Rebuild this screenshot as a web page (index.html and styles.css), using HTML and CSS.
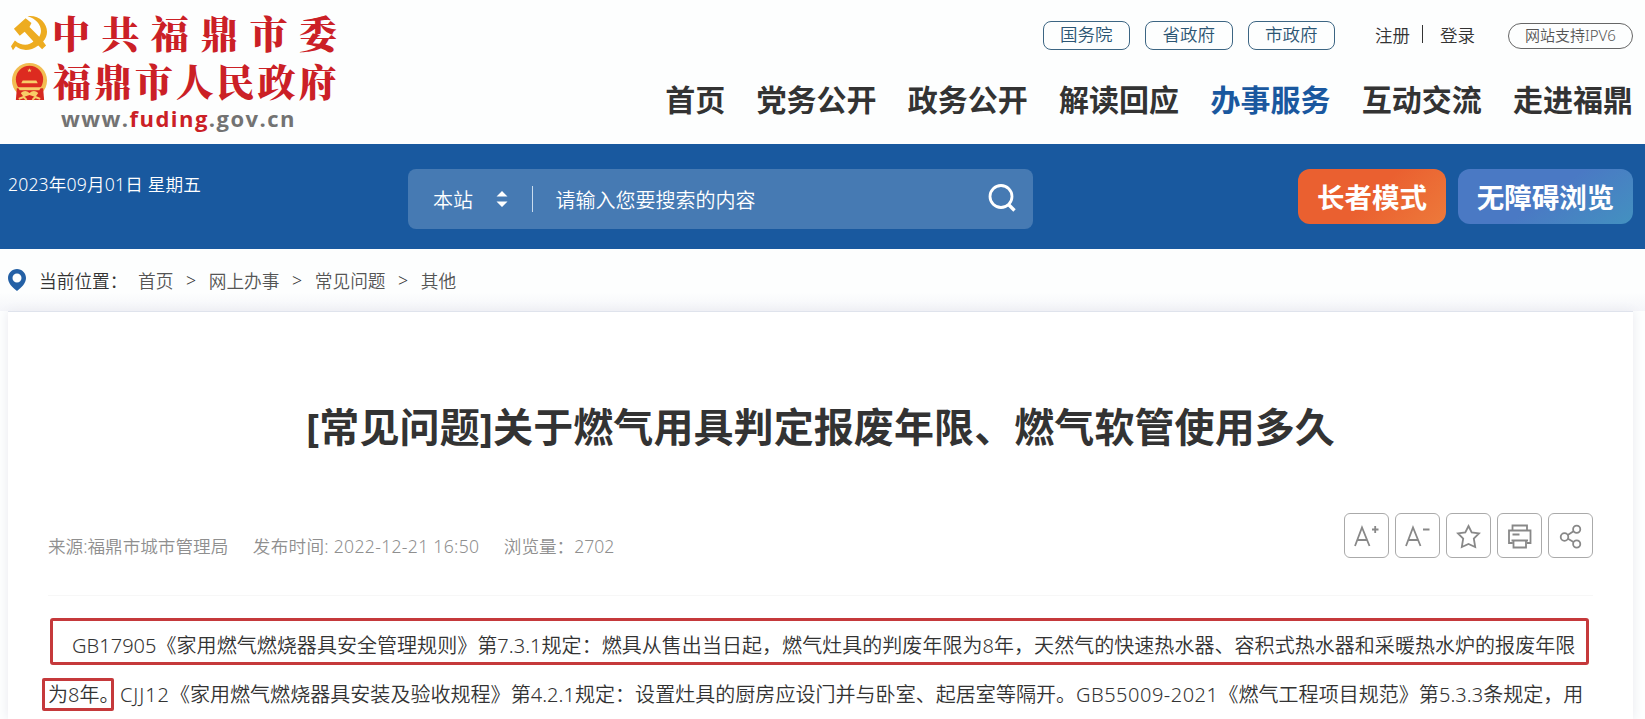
FILE: index.html
```html
<!DOCTYPE html>
<html lang="zh-CN">
<head>
<meta charset="utf-8">
<title>福鼎市人民政府</title>
<link rel="stylesheet" href="styles.css">
</head>
<body>
<header class="header">
  <div class="brand">
    <svg class="emblems" width="37" height="92" viewBox="0 0 38 92">
      <path d="M17 1C33 -1 43 16 33 27L36 31L32 35L28 31C20 37 11 37 5 32L2 36L0 32L4 26C11 32 19 31 23 27L14 17L9 21L3 14L15 3L21 8L19 12L29 22C34 14 28 4 17 1Z" fill="#edac20"/>
      <circle cx="19" cy="67" r="18" fill="#f2bd52"/>
      <path d="M6 75L5 87H34L33 75Z" fill="#d6281f"/>
      <circle cx="19" cy="66" r="14" fill="#dd2b20"/>
      <path d="M19 54.500l.7 1.500h1.600l-1.300 1 .5 1.600-1.500-1-1.500 1 .5-1.600-1.300-1h1.600zM12 67h14l1.500 3h-17zM7 74h24l-2 3H9zM10 80c3-3 6-3 9 0 3-3 6-3 9 0l-3 4-6-2-6 2z" fill="#f8cd68"/>
      <path d="M8 86l5-2 3 3M30 86l-5-2-3 3" fill="none" stroke="#f8cd68" stroke-width="2"/>
    </svg>
    <div class="names">
      <div class="name party">中共福鼎市委</div>
      <div class="name gov">福鼎市人民政府</div>
      <div class="domain">www.<b>fuding</b>.gov.cn</div>
    </div>
  </div>
  <div class="header-right">
    <div class="top-links">
      <a class="pill">国务院</a><a class="pill">省政府</a><a class="pill">市政府</a>
      <div class="account"><span>注册</span><i></i><span>登录</span></div>
      <a class="ipv6">网站支持IPV6</a>
    </div>
    <nav class="nav"><a>首页</a><a>党务公开</a><a>政务公开</a><a>解读回应</a><a class="active">办事服务</a><a>互动交流</a><a>走进福鼎</a></nav>
  </div>
</header>

<section class="banner">
  <div class="date">2023年09月01日 星期五</div>
  <div class="search">
    <span>本站</span>
    <svg class="arrows" width="12" height="16" viewBox="0 0 12 16"><path d="M6 0L11.5 5.5H.5ZM6 16L.5 10.5H11.5Z" fill="#fff"/></svg>
    <i class="divider"></i>
    <span class="placeholder">请输入您要搜索的内容</span>
    <svg class="lens" width="28" height="28" viewBox="0 0 28 28" fill="none" stroke="#fff" stroke-width="2.8"><circle cx="13" cy="12.5" r="11"/><path d="M20.5 20.5L26.5 26.5" stroke-width="3.4"/></svg>
  </div>
  <div class="modes"><a class="mode elder">长者模式</a><a class="mode access">无障碍浏览</a></div>
</section>

<div class="crumbs">
  <svg width="18" height="22" viewBox="0 0 18 22"><path fill-rule="evenodd" d="M9 0C4 0 0 4 0 9C0 14 4 18 9 22C14 18 18 14 18 9C18 4 14 0 9 0ZM9 4.5A4.5 4.5 0 1 1 9 13.5A4.5 4.5 0 1 1 9 4.5Z" fill="#2460a5"/></svg>
  <span class="here">当前位置：</span><a>首页</a><i>&gt;</i><a>网上办事</a><i>&gt;</i><a>常见问题</a><i>&gt;</i><a>其他</a>
</div>

<main class="card">
  <h1 class="title">[常见问题]关于燃气用具判定报废年限、燃气软管使用多久</h1>
  <div class="info">
    <div class="meta"><span class="source">来源:福鼎市城市管理局</span><span class="time">发布时间: 2022-12-21 16:50</span><span>浏览量：2702</span></div>
    <div class="tools">
      <a><svg viewBox="0 0 45 45"><path d="M11 33L18 14.5L25.5 33M13.5 27H23M28 16.5H34.5M31.2 13V20"/></svg></a>
      <a><svg viewBox="0 0 45 45"><path d="M11 33L18 14.5L25.5 33M13.5 27H23M28 16.5H34.5"/></svg></a>
      <a><svg viewBox="0 0 45 45"><path d="M22.5 13L25.7 19.4L33 20.3L27.8 25.5L29.2 34L22.5 31L15.8 34L17.2 25.5L12 20.3L19.3 19.4Z"/></svg></a>
      <a><svg viewBox="0 0 45 45"><path d="M15.5 17.5V12.5H30V17.5M15.5 30H12V17.5H33.5V30H30M15.5 21.5H22.5M14.5 27.5H31M16.5 27.5V34.5H29V27.5"/></svg></a>
      <a><svg viewBox="0 0 45 45"><circle cx="16.5" cy="24" r="3.8"/><circle cx="28.7" cy="16.2" r="3.6"/><circle cx="28.7" cy="31" r="3.6"/><path d="M19.8 22L25.5 18.2M20 25.7L25.5 29"/></svg></a>
    </div>
  </div>
  <article class="article">
    <p class="line first"><span class="t1">GB17905《家用燃气燃烧器具安全管理规则》第7.3.1规定：燃具从售出当日起，燃气灶具的判废年限为8年，天然气的快速热水器、容积式热水器和采暖热水炉的报废年限</span></p>
    <p class="line second"><span class="mark">为8年。</span><span class="t2"><span class="code">CJJ12</span>《家用燃气燃烧器具安装及验收规程》第4.2.1规定：设置灶具的厨房应设门并与卧室、起居室等隔开。<span class="standard">GB55009-2021</span>《燃气工程项目规范》第5.3.3条规定，用</span></p>
  </article>
</main>
</body>
</html>
```
FILE: styles.css
```css
* { box-sizing: border-box; }
body { margin: 0; width: 1645px; height: 719px; overflow: hidden; background: #fdfefe; color: #333; font-family: "Noto Sans", "Noto Sans CJK SC", sans-serif; font-weight: 360; white-space: nowrap; }
i { font-style: normal; }
h1, p { margin: 0; }

.header { height: 144px; padding: 0 12px 0 11px; display: flex; justify-content: space-between; }
.brand { display: flex; gap: 5px; padding-top: 14px; }
.name { color: #cb2026; font-family: "Noto Serif CJK SC", "Noto Sans CJK SC", serif; font-weight: 900; font-size: 38px; line-height: 38px; height: 48px; }
.party { letter-spacing: 11.4px; margin: -1px 0 0 -1px; }
.gov { letter-spacing: 2.9px; }
.domain { padding-left: 8px; color: #737373; font: 700 22px/25px "Open Sans", sans-serif; letter-spacing: 1.45px; margin-top: -3px; }
.domain b { color: #cb2026; font-weight: 700; }

.top-links { display: flex; justify-content: flex-end; padding-top: 21px; height: 78px; font-size: 17.5px; }
.pill { width: 87.5px; height: 29px; margin-right: 15px; border: 1px solid #3c6583; border-radius: 8px; color: #2c5573; line-height: 25px; text-align: center; }
.account { display: flex; align-items: center; height: 26px; padding-left: 25px; }
.account i { width: 1px; height: 18px; background: #333; margin: 0 17px 0 12px; }
.ipv6 { width: 125px; height: 26px; margin: 2px 0 0 33px; border: 1px solid #666; border-radius: 13px; font-size: 15px; line-height: 23px; text-align: center; color: #555; }
.nav { display: flex; gap: 31.3px; font-size: 30px; font-weight: 700; line-height: 44px; }
.active { color: #1a589f; }

.banner { height: 105px; padding: 25px 12px 0 8px; background: #19599f; color: #fff; display: flex; }
.date { width: 400px; font-size: 17.6px; line-height: 30px; letter-spacing: .16px; }
.search { width: 625px; height: 60px; border-radius: 8px; background: #467ab3; display: flex; align-items: center; padding: 0 17px 0 25px; font-size: 20px; }
.arrows { margin-left: 23px; }
.divider { width: 1px; height: 26px; margin: 0 22.500px 0 24px; background: #c9dcee; }
.lens { margin: -3px 0 0 auto; }
.modes { display: flex; gap: 12px; margin-left: auto; }
.mode { height: 55px; border-radius: 12px; font-size: 27.5px; font-weight: 700; line-height: 57px; text-align: center; }
.elder { width: 148px; background: linear-gradient(135deg, #ea6030 50%, #ed7a3b); }
.access { width: 175px; background: linear-gradient(145deg, #4a79c4 50%, #4391c0); }

.crumbs { height: 62px; padding: 0 8px; display: flex; align-items: center; font-size: 17.7px; color: #555; background: linear-gradient(#fdfefe 70%, #f4f5f9); }
.here { width: 99px; margin-left: 13px; color: #333; }
.crumbs i { width: 35.3px; text-align: center; color: #333; }

.card { height: 408px; margin: 0 12px 0 8px; padding: 85px 40px 0; background: #fff; border-top: 1px solid #dfe3ec; box-shadow: 0 0 10px #e9eaf0; }
.title { text-align: center; font-size: 40px; font-weight: 700; line-height: 60px; height: 116px; letter-spacing: .09px; }
.info { display: flex; justify-content: space-between; height: 83px; border-bottom: 1px solid #f7f7f7; }
.meta { display: flex; gap: 24.500px; padding-top: 21px; color: #8f8f8f; font-size: 17.6px; line-height: 24px; }
.time { letter-spacing: .3px; }
.tools { display: flex; gap: 6px; }
.tools a { width: 45px; height: 45px; border: 1px solid #aaa; border-radius: 6px; }
.tools svg { display: block; width: 45px; height: 45px; margin: -1px; fill: none; stroke: #888; stroke-width: 1.8; }
.article { padding-top: 22px; font-size: 20px; letter-spacing: .045px; }
.line { display: flex; }
.first { width: 1539px; height: 47px; margin-left: 2px; border: 3px solid #c5393b; border-radius: 3px; padding-left: 19px; line-height: 49px; }
.second { margin: 13px 0 0 -6px; }
.mark { width: 72px; height: 33px; border: 3px solid #c5393b; border-radius: 2px; padding-left: 3px; line-height: 27px; }
.t2 { margin-left: 6px; line-height: 33px; }
.code { letter-spacing: .9px; }
.standard { letter-spacing: .5px; }
```
